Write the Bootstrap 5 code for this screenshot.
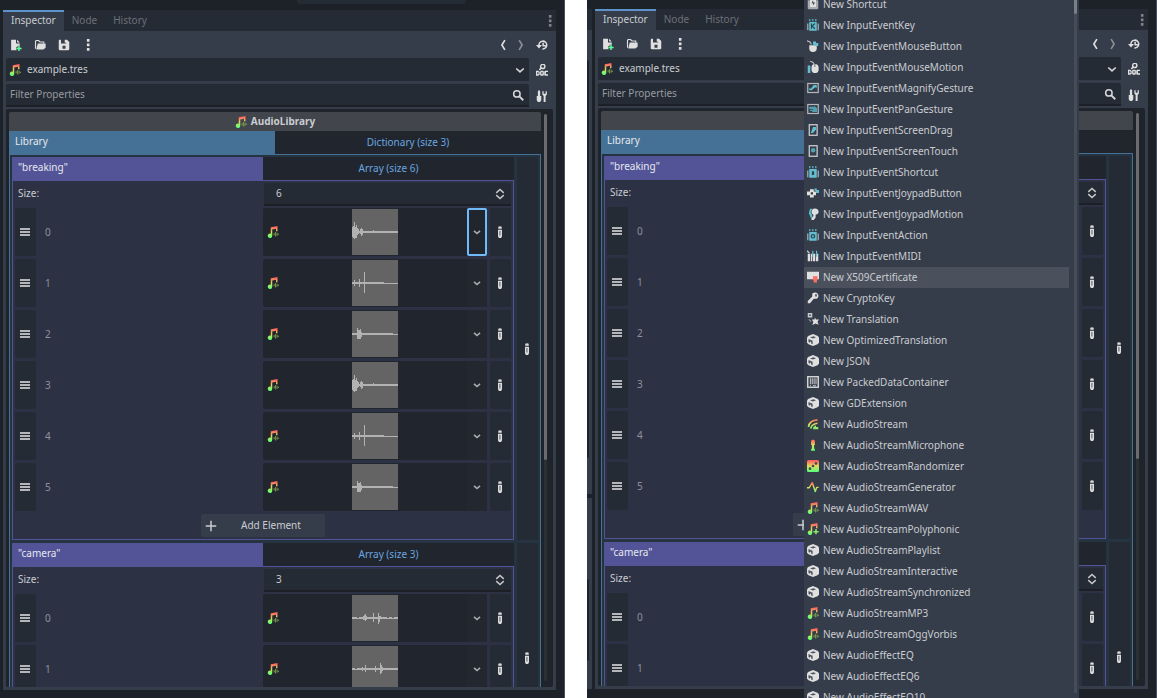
<!DOCTYPE html>
<html lang="en" data-bs-theme="dark">
<head>
<meta charset="utf-8">
<meta name="viewport" content="width=device-width, initial-scale=1">
<title>AudioLibrary inspector</title>
<link href="https://cdn.jsdelivr.net/npm/bootstrap@5.3.0/dist/css/bootstrap.min.css" rel="stylesheet">
<style>
:root{--base:#363d4a;--dark:#252b34;--deep:#21252d;--frame:#1d2128;--fg:#c9ccd1;--blue:#457196;--violet:#535398}
body{font:10px/15px "Noto Sans",sans-serif;color:var(--fg);background:#fff;height:100vh;overflow:hidden;display:grid;grid-template:100vh/minmax(0,565fr) minmax(0,22fr) minmax(0,570fr)}
button,input,select{font:inherit;color:inherit;border:0;border-radius:0;padding:0;background:none;min-width:0}
.ic{width:12px;height:12px;flex:none;display:block}
.shot{background:var(--frame);border-right:1px solid #4a515e;min-width:0}
.shot-a{grid-column:1;padding:10px 8px 8px 3px}
.shot-b{grid-column:3;padding:9px 8px 9px 0;gap:3px}
.top-tab{height:4px;width:30%;left:297px;background:var(--dark);border-radius:0 0 3px 3px}
.dock{background:var(--base);min-width:0}
.dock-tabs{height:21px;background:var(--dark);border:0}
.dock-tabs .nav-link{border:0;border-radius:0;height:21px;padding:2px 8px 3px;margin:0;color:#6b7079;line-height:16px}
.dock-tabs .nav-link.active{background:var(--base);color:var(--fg);border-top:2px solid #5c93cb;padding-top:0}
.dots{width:12px;height:21px;color:#7d8188}
.dock-body{padding:0 3px 3px;min-height:0}
.tools{height:27px;padding-left:4px;gap:12px;flex:none}
.path-row{margin-bottom:3px;flex:none}
.filter{margin-bottom:2px;flex:none}
.tools button,.side{color:#e0e0e0}
.side{width:24px;padding-left:2px;display:flex;align-items:center;justify-content:center;flex:none}
.step{gap:6px;margin-right:2px}
.field{height:23px;background:var(--dark);border-radius:2px 2px 0 0;position:relative}
.field select,.field input{width:100%;height:100%;appearance:none;outline:0}
.field select{padding-left:21px}
.field .lead-ic{position:absolute;left:3px;top:6px}
.field .tail-ic{position:absolute;right:3px;top:6px;color:#d5d6d8;pointer-events:none}
.filter .field .tail-ic{right:5px;top:5px}
.under{border-bottom:2px solid #1c2026}
.filter input{padding:0 0 1px 4px}
.filter input::placeholder{color:#969aa1;opacity:1}
.tree{background:#1f232a;border-radius:2px;padding:3px 3px 0;gap:3px}
.title-bar{height:19px;background:#42454c;border-radius:2px 2px 0 0;font-weight:700;gap:4px}
.half{flex:0 0 50%;min-width:0}
.head-row{height:24px}
.key{background:var(--blue);color:#e6e9ed;padding:3px 0 0 6px}
.val{background:var(--deep);border-bottom:1px solid var(--blue);color:#69a7e0}
.dict{background:#263341;border:solid var(--blue);border-width:0 1px;padding:2px 2px 0}
.entry{gap:3px;margin-bottom:3px}
.entry-tall{min-height:230px}
.arr .key{background:var(--violet)}
.arr .val{border-color:var(--violet)}
.arr-body{background:#2d3144;border:solid var(--violet);border-width:0 1px 1px;padding:2px}
.pen{width:21px;padding-right:1px;flex:none;background:var(--dark);color:#dcdcdc;border-radius:2px;display:flex;align-items:center;justify-content:center}
.size-row{margin-bottom:2px}
.size-row label{padding-left:3px;line-height:21px}
.spin{margin-left:1px;height:23px}
.spin input{padding:0 0 1px 12px;width:100%;height:21px;outline:0}
.spin .updn{width:23px;color:#c6c7c9;display:flex;align-items:center;justify-content:center;flex:none}
.item{height:48px;margin-bottom:3px;gap:3px}
.item .half{flex-basis:calc(50% - 3px)}
.grip{width:21px;padding-right:1px;background:var(--dark);color:#b4b6ba;border-radius:2px;display:flex;align-items:center;justify-content:center}
.idx{padding-left:9px;color:#8d919c}
.res{background:var(--deep);border-radius:2px}
.pick{display:grid;grid-template-columns:20px 1fr;align-items:center;justify-items:center;flex:1}
.wave{width:46px;height:46px;background:#646464;color:#b2b2b2;display:block}
.drop{width:20px;background:#232830;color:#a9abaf;display:flex;align-items:center;justify-content:center}
.drop.on{background:var(--deep);border:2px solid #70bafa;border-radius:2px}
.add{height:23px;width:124px;background:var(--base);border-radius:2px;padding-left:4px}
.track{width:3px;background:#2b2f36;margin:2px 3px 6px 0;border-radius:2px}
.track span{display:block;height:61%;background:#6a6c70;border-radius:2px}
.edge{width:5px;display:grid;grid-template-rows:484fr 191fr;gap:4px}
.edge-top{background:linear-gradient(var(--dark) 21px,var(--base) 21px);padding:51px 0 36px}
.edge-low{background:var(--base);padding:81px 0 28px}
.edge-in{width:2px;height:100%;background:#1f232a;border-radius:0 2px 2px 0}
.pop{top:0;bottom:0;left:217px;right:77px;background:var(--base);overflow:hidden;padding-right:2px}
.pop-list{margin:-6px 5px 0 0;padding:0;list-style:none;flex:1}
.pop-list button{height:21px;width:100%;display:flex;align-items:center;gap:4px;padding:0 0 1px 3px;text-align:left;white-space:nowrap}
.pop-list button.cur{background:#4b515c}
.pop-bar{width:3px;background:#464c58;margin-bottom:5px}
.pop-bar span{display:block;height:14px;background:#7b7f87;border-radius:0 0 2px 2px}
</style>
</head>
<body>
<svg width="0" height="0" class="position-absolute" aria-hidden="true">
<defs>
<linearGradient id="g" gradientUnits="userSpaceOnUse" x1="0" y1="1" x2="0" y2="15"><stop offset="0" stop-color="#ff5f5f"/><stop offset=".5" stop-color="#e1da5b"/><stop offset="1" stop-color="#5fff77"/></linearGradient>
<symbol id="note" viewBox="0 0 16 16"><path fill="url(#g)" d="M5 1.500 14 0v7h-2V3.600L7 4.500V13a3 3 0 1 1-2-2.800z"/><path stroke="#84ab48" stroke-width="1.200" d="M9.500 9.500v3M11.500 8v6M13.500 9v4M15.300 10.300v1.500"/></symbol>
<symbol id="poly" viewBox="0 0 16 16"><path fill="url(#g)" d="M5 1.500 14 0v7h-2V3.600L7 4.500V13a3 3 0 1 1-2-2.800z"/><path fill="#8eea66" d="M11 8h2v2.500h2.500v2H13V15h-2v-2.500H8.500v-2H11z"/></symbol>
<symbol id="new" viewBox="0 0 16 16"><path fill="currentColor" d="M1.500 1H8v5h5v3h-3v2H8v3h1v1H1.500zM9.500 1 13 4.500H9.500z"/><path fill="#5fff97" d="M11 9h2v2.500h2.500v2H13V16h-2v-2.500H8.500v-2H11z"/></symbol>
<symbol id="open" viewBox="0 0 16 16"><path fill="none" stroke="currentColor" stroke-width="1.500" d="M2 13V3l1-1h3l2 2h5v2"/><path fill="currentColor" d="M5 6h10.500v5.500L12.500 14H3z"/></symbol>
<symbol id="save" viewBox="0 0 16 16"><path fill="currentColor" fill-rule="evenodd" d="M1 2 2 1h2v5h7V1h1l3 3v10l-1 1H2l-1-1zm8-1h2v4H9zM6 9v4h4V9z"/></symbol>
<symbol id="dots" viewBox="0 0 16 16"><path fill="currentColor" d="M6.500 0h3.500v3.500H6.500zm0 6H10v3.500H6.500zm0 6H10v3.500H6.500z"/></symbol>
<symbol id="back" viewBox="0 0 16 16"><path fill="none" stroke="currentColor" stroke-width="2.200" d="M10.500 1.500 6.500 8l4 6.500"/></symbol>
<symbol id="fwd" viewBox="0 0 16 16"><path fill="none" stroke="currentColor" stroke-width="2.200" d="m5.500 1.500 4 6.500-4 6.500"/></symbol>
<symbol id="hist" viewBox="0 0 16 16"><path fill="none" stroke="currentColor" stroke-width="2" d="M4 9a5.200 5.200 0 1 1 4.500 4.200M9.500 5v4H13"/><path fill="currentColor" d="M0 8h8l-4 4.500z"/></symbol>
<symbol id="down" viewBox="0 0 16 16"><path fill="none" stroke="currentColor" stroke-width="2.200" d="m3 6 5 4.500L13 6"/></symbol>
<symbol id="chev" viewBox="0 0 16 16"><path fill="none" stroke="currentColor" stroke-width="2.200" d="m4 6.500 4 3.500 4-3.500"/></symbol>
<symbol id="find" viewBox="0 0 16 16"><circle cx="6.500" cy="6.500" r="4.300" fill="none" stroke="currentColor" stroke-width="2"/><path stroke="currentColor" stroke-width="2.500" d="m9.500 9.500 5.500 5.500"/></symbol>
<symbol id="doc" viewBox="0 0 16 16"><circle cx="9" cy="3.200" r="2.800" fill="none" stroke="currentColor" stroke-width="1.900"/><path d="M7 5 4.500 8" stroke="currentColor" stroke-width="2"/><path fill="currentColor" fill-rule="evenodd" d="M0 9h3l2 1.500v3.500L3 15.500H0zm1.800 1.800v3h.9l.7-.7v-1.600l-.7-.7zM6.500 9h3l1 1v4.500l-1 1h-3l-1-1V10zm.8 1.800v3h1.400v-3zM12 9h4v1.800h-2.700v3H16v1.700h-4l-1-1V10z"/></symbol>
<symbol id="tune" viewBox="0 0 16 16"><path fill="currentColor" d="M2.500 1.500 4 0l1.500 1.500V8H7v5.500L5.500 16h-3L1 13.500V8h1.500zM8.500 1.500h1.700V5h2.600V1.500h1.700V6l-1.700 2V16h-2.600V8L8.500 6z"/></symbol>
<symbol id="pen" viewBox="0 0 16 16"><path fill="currentColor" d="M5.700 1 8 .3l2.300.7v2.500H5.700zM5.300 5h5.400v8.500L9.500 16h-3l-1.200-2.500z"/><path fill="#4a4f57" d="M7.300 6.500h1.200v6H7.300z"/></symbol>
<symbol id="grip" viewBox="0 0 16 16"><path fill="currentColor" d="M1.300 2.700h13.400v2.600H1.300zm0 4H14.700v2.600H1.300zm0 4H14.700v2.600H1.300z"/></symbol>
<symbol id="updn" viewBox="0 0 16 16"><path fill="none" stroke="currentColor" stroke-width="2" d="M3 6.500 8 2l5 4.500M3 9.500 8 14l5-4.500"/></symbol>
<symbol id="plus" viewBox="0 0 16 16"><path fill="none" stroke="currentColor" stroke-width="2" d="M8 1v14M1 8h14"/></symbol>
<symbol id="cube" viewBox="0 0 16 16"><path fill="#e0e0e0" d="M8 0 14.500 2.500 16 4.500v7L14 13.500 8 16l-6-2.500-2-2v-7l1.500-2z"/><path fill="#4d5460" d="M4 4.500 8.500 3l3.500 1.300L8 6z"/><path fill="#4d5460" d="M2 6.500 7.500 9v4.500L5.500 12.600V10.500L4 10v1.500L2 10.500z"/></symbol>
<symbol id="short" viewBox="0 0 16 16"><path fill="#a8abb0" d="M1 3h14v11l-1 1H2l-1-1z"/><path fill="#e0e0e0" d="M4 1h8v11H4z"/><path fill="#454c58" d="m8 3-2 4h2v3l3-4H8.500z"/></symbol>
<symbol id="ikey" viewBox="0 0 16 16"><path fill="#929aa4" d="M0 6h2v9H0zM14 6h2v9h-2z"/><path fill="#62bfd0" d="M3 4h10v11.500H3zM3 0h1.500v3H3zM7 0h1.500v3H7zM11 0h1.500v3H11z"/><path fill="none" stroke="#29454f" stroke-width="1.600" d="M6 6v7M10.500 6 7 9.500l3.500 3.500"/></symbol>
<symbol id="isc" viewBox="0 0 16 16"><path fill="#929aa4" d="M0 6h2v9H0zM14 6h2v9h-2z"/><path fill="#62bfd0" d="M3 4h10v11.500H3zM3 0h1.500v3H3zM7 0h1.500v3H7zM11 0h1.500v3H11z"/><path fill="#29454f" d="M6.500 7h3v5h-3z"/></symbol>
<symbol id="iact" viewBox="0 0 16 16"><path fill="#929aa4" d="M0 6h2v9H0zM14 6h2v9h-2z"/><path fill="#62bfd0" d="M3 4h10v11.500H3zM3 0h1.500v3H3zM7 0h1.500v3H7zM11 0h1.500v3H11z"/><circle cx="8" cy="9.700" r="2.300" fill="none" stroke="#29454f" stroke-width="1.600"/></symbol>
<symbol id="mbtn" viewBox="0 0 16 16"><path fill="none" stroke="#b8bbc0" stroke-width="1.600" d="m0 1 4 1.500 2 3.500"/><path fill="#e0e0e0" d="M3 7h10v4a5 5 0 0 1-10 0z"/><path fill="#62bfd0" d="M8 2h4v2h3v4h-4L8 6z"/></symbol>
<symbol id="mmot" viewBox="0 0 16 16"><path fill="none" stroke="#b8bbc0" stroke-width="1.600" d="m4 0 4 2 2 3"/><path fill="#e0e0e0" d="M6 9q0-5 4.500-5Q15.500 4 15.500 9v2a4.700 5 0 0 1-9.500 0z"/><path fill="#62bfd0" d="M1 6h3.500v10H1z"/><path stroke="#454c58" d="M10.500 4v4"/></symbol>
<symbol id="mag" viewBox="0 0 16 16"><rect x="1" y="2" width="14" height="12" fill="none" stroke="#b4b7bc" stroke-width="1.600"/><path fill="#62bfd0" d="M9 4h4v4l-2-1-5 4H3V8l2 1z"/></symbol>
<symbol id="pan" viewBox="0 0 16 16"><rect x="1" y="2" width="14" height="12" fill="none" stroke="#b4b7bc" stroke-width="1.600"/><path fill="#4fa0b0" d="M3 5h7V4l3.500 3v5H7v-1.500H4V9h4V8H3z"/></symbol>
<symbol id="drag" viewBox="0 0 16 16"><rect x="3" y="1" width="10.500" height="14" fill="none" stroke="#d4d5d8" stroke-width="1.600"/><path fill="#62bfd0" d="M8 4h4v3l-4 5H5z"/></symbol>
<symbol id="touch" viewBox="0 0 16 16"><rect x="3" y="1" width="10.500" height="14" fill="none" stroke="#d4d5d8" stroke-width="1.600"/><circle cx="8.200" cy="7" r="3" fill="#4fa5b5"/></symbol>
<symbol id="jbtn" viewBox="0 0 16 16"><path fill="#e0e0e0" fill-rule="evenodd" d="M4 3h5v3h3v5H9v3H4v-3H0V6h4zm1 4v3h3V7z"/><path fill="#62bfd0" d="M10 2h3v2h3v4h-4V5h-2z"/></symbol>
<symbol id="jmot" viewBox="0 0 16 16"><path fill="#e0e0e0" d="M6 5q0-4 4.500-4.500Q15.500 1 15.500 5q0 3-4 4v3.500L9 16H6v-3l2.500-2V9Q6 8 6 5z"/><path fill="#62bfd0" d="M4 1h3L5 5l2 5v3H5L2.500 7z"/></symbol>
<symbol id="midi" viewBox="0 0 16 16"><path stroke="#c4c6ca" stroke-width="2" d="m0 1 3 3"/><path fill="#e0e0e0" d="M1 5h3v10H1zm4 0h2v10H5zm3 0h3v10H8zm4 0h3v10h-3z"/><path fill="#62bfd0" d="M7 1h1.500v8H7zM12 1h1.500v8H12z"/></symbol>
<symbol id="cert" viewBox="0 0 16 16"><path fill="#e0e0e0" d="M0 1h16v10H0z"/><path fill="#fc6f67" d="M8 7h6v5l-1 1v3l-2-1-2 1v-3l-1-1z"/></symbol>
<symbol id="key" viewBox="0 0 16 16"><path fill="#e0e0e0" fill-rule="evenodd" d="M7 2q4-3 7 0 3 4-1 7H9l-5 6H1v-3l6-6zm4 1v3h2V3z"/></symbol>
<symbol id="tran" viewBox="0 0 16 16"><path fill="#c8cacd" fill-rule="evenodd" d="M1 0h6v6H1zm2 2v2h2V2z"/><path fill="#e0e0e0" d="m10.500 6 1.500 2.500h4l-2 3 1.500 4-4-1.500-4.500 2 1.500-4-2-3.500h3.500z"/><path fill="#989da5" d="m3 8 3 3-1 1-3-3z"/></symbol>
<symbol id="pack" viewBox="0 0 16 16"><rect x="1" y="1" width="14" height="14" fill="none" stroke="#e0e0e0" stroke-width="1.800"/><path stroke="#c4c6ca" stroke-width="1.400" d="M4.500 3v8M7 3v8M9.500 3v8M12 3v8M4 13h1.500M8 13h4"/></symbol>
<symbol id="aud" viewBox="0 0 16 16"><path fill="none" stroke="url(#g)" stroke-width="2.200" d="M2 12Q3 3 14 2.500M5 14q1-6 9-7"/><path fill="#8eea66" d="M8 14q1-4 4-4v2h3v3H8z"/></symbol>
<symbol id="mic" viewBox="0 0 16 16"><path fill="url(#g)" d="M5.500 2 8 .500 10.500 2v6H9.500v5h1v2.500h-5V13h1V8h-1z"/></symbol>
<symbol id="rand" viewBox="0 0 16 16"><rect x="0" y="0" width="16" height="16" rx="2" fill="url(#g)"/><circle cx="4" cy="11.500" r="1.800" fill="#454c58"/><circle cx="8" cy="8" r="1.800" fill="#454c58"/><circle cx="12" cy="4.500" r="1.800" fill="#454c58"/></symbol>
<symbol id="gen" viewBox="0 0 16 16"><path fill="none" stroke="url(#g)" stroke-width="1.900" stroke-linejoin="round" d="M0 9h3l4-7 4 12 2-5.500h2.500"/></symbol>
<symbol id="wa" viewBox="0 0 46 46"><path fill="currentColor" d="M0 22h46v2H0zM0 18h1v10H0zm1-1h1v12H1zm1-4h1v17H2zm1 5h1v11H3zm1-2h1v13H4zm1 3h1v7H5zm1 1h1v5H6zm2 0h1v5H8zm1-1h1v8H9zm1 1h1v6h-1zm11 1h1v1h-1z"/></symbol>
<symbol id="wb" viewBox="0 0 46 46"><path fill="currentColor" d="M0 22h32v2H0zm32 1h14v1H32zM2 20h1v6H2zm5-1h1v8H7zm5-7h1v21h-1z"/></symbol>
<symbol id="wc" viewBox="0 0 46 46"><path fill="currentColor" d="M0 22h41v2H0zm41 1h5v1h-5zM5 17h1v11H5zm1 2h2v9H6zm2-1h1v10H8zm1 3h1v5H9z"/></symbol>
<symbol id="wd" viewBox="0 0 46 46"><path fill="currentColor" d="M0 22h5v2H0zm5 1h2v1H5zm2-1h28v2H7zm4-1h1v4h-1zm1-1h1v5h-1zm1-1h1v7h-1zm1 2h1v4h-1zm7-3h1v9h-1zm5 0h1v11h-1zm1 3h1v6h-1zm1 0h1v3h-1zm7 2h2v1h-2zm2-1h3v2h-3zm3 1h2v1h-2zm2-1h4v2h-4z"/></symbol>
<symbol id="we" viewBox="0 0 46 46"><path fill="currentColor" d="M0 22h3v2H0zm3 1h2v1H3zm2-1h41v2H5zm5-1h1v4h-1zm3-2h1v7h-1zm10 1h1v6h-1zm5-3h1v11h-1zm1 2h1v8h-1zm1 2h1v4h-1z"/></symbol>
</defs></svg>

<main class="shot shot-a position-relative d-flex">
  <div class="top-tab position-absolute top-0"></div>
  <div class="dock flex-fill d-flex flex-column" data-inspector="a"></div>
</main>
<section class="shot shot-b position-relative d-flex">
  <div class="edge"><div class="edge-top"><div class="edge-in"></div></div><div class="edge-low"><div class="edge-in"></div></div></div>
  <div class="dock flex-fill d-flex flex-column" data-inspector="b"></div>
  <div class="pop position-absolute d-flex"><ul class="pop-list" id="types"></ul><div class="pop-bar"><span></span></div></div>
</section>

<script>
const icon = (n, c = '') => `<svg class="ic ${c}" aria-hidden="true"><use href="#${n}"/></svg>`;
const item = (w, i, on) => `
  <div class="item d-flex">
    <div class="half d-flex"><button class="grip" aria-label="Reorder">${icon('grip')}</button><span class="idx align-self-center">${i}</span></div>
    <div class="res d-flex flex-fill"><button class="pick" aria-label="Sound ${i}">${icon('note')}<svg class="wave"><use href="#${w}"/></svg></button><button class="drop ${on ? 'on' : ''}" aria-label="Choose type">${icon('chev')}</button></div>
    <button class="pen" aria-label="Edit element">${icon('pen')}</button>
  </div>`;
const entry = (p, name, n, waves, whole) => `
  <div class="entry d-flex ${whole ? '' : 'entry-tall'}">
    <div class="arr flex-fill d-flex flex-column">
      <div class="head-row d-flex"><div class="key half">"${name}"</div><button class="val half">${p === 'a' ? `Array (size ${n})` : ''}</button></div>
      <div class="arr-body flex-fill">
        <div class="size-row d-flex"><label class="half" for="${p}-${name}">Size:</label><div class="spin under field d-flex flex-fill"><input id="${p}-${name}" type="text" inputmode="numeric" value="${p === 'a' ? n : ''}"><button class="updn" aria-label="Change size">${icon('updn')}</button></div></div>
        ${waves.map((w, i) => item(w, i, whole && !i && p === 'a')).join('')}
        ${whole ? `<button class="add d-flex align-items-center mx-auto" aria-label="Add Element">${icon('plus')}${p === 'a' ? '<span class="flex-fill text-center">Add Element</span>' : ''}</button>` : ''}
      </div>
    </div>
    <button class="pen" aria-label="Edit entry">${icon('pen')}</button>
  </div>`;
document.querySelectorAll('[data-inspector]').forEach(el => {
  // Inspector b has the type menu open over its value column, so those labels stay empty.
  const p = el.dataset.inspector;
  el.innerHTML = `
  <div class="dock-tabs nav nav-tabs flex-nowrap">
    <button class="nav-link active">Inspector</button><button class="nav-link">Node</button><button class="nav-link">History</button>
    <button class="dots ms-auto d-flex align-items-center" aria-label="Dock menu">${icon('dots')}</button>
  </div>
  <div class="dock-body d-flex flex-column flex-fill">
    <div class="tools d-flex align-items-center">
      <button aria-label="New">${icon('new')}</button><button aria-label="Open">${icon('open')}</button><button aria-label="Save">${icon('save')}</button><button aria-label="More">${icon('dots')}</button>
      <div class="ms-auto d-flex"><div class="step d-flex"><button aria-label="Back">${icon('back')}</button><button aria-label="Forward" class="opacity-50">${icon('fwd')}</button></div><button aria-label="History" class="side">${icon('hist')}</button></div>
    </div>
    <div class="path-row d-flex"><div class="field flex-fill">${icon('note','lead-ic')}<select aria-label="Resource"><option>example.tres</option></select>${icon('down','tail-ic')}</div><button class="side" aria-label="Documentation">${icon('doc')}</button></div>
    <div class="filter d-flex"><div class="field under flex-fill"><input type="text" placeholder="Filter Properties" aria-label="Filter Properties">${icon('find','tail-ic')}</div><button class="side" aria-label="Property tools">${icon('tune')}</button></div>
    <div class="tree d-flex flex-fill overflow-hidden">
      <div class="flex-fill">
        <div class="title-bar d-flex align-items-center justify-content-center">${p === 'a' ? icon('note') + '<span>AudioLibrary</span>' : ''}</div>
        <div class="head-row d-flex"><div class="key half">Library</div><button class="val half">${p === 'a' ? 'Dictionary (size 3)' : ''}</button></div>
        <div class="dict">${entry(p, 'breaking', 6, ['wa','wb','wc','wa','wb','wc'], true)}${entry(p, 'camera', 3, ['wd','we'], false)}</div>
      </div>
      <div class="track"><span></span></div>
    </div>
  </div>`;
});
const types = [['short','Shortcut'],['ikey','InputEventKey'],['mbtn','InputEventMouseButton'],['mmot','InputEventMouseMotion'],['mag','InputEventMagnifyGesture'],['pan','InputEventPanGesture'],['drag','InputEventScreenDrag'],['touch','InputEventScreenTouch'],['isc','InputEventShortcut'],['jbtn','InputEventJoypadButton'],['jmot','InputEventJoypadMotion'],['iact','InputEventAction'],['midi','InputEventMIDI'],['cert','X509Certificate'],['key','CryptoKey'],['tran','Translation'],['cube','OptimizedTranslation'],['cube','JSON'],['pack','PackedDataContainer'],['cube','GDExtension'],['aud','AudioStream'],['mic','AudioStreamMicrophone'],['rand','AudioStreamRandomizer'],['gen','AudioStreamGenerator'],['note','AudioStreamWAV'],['poly','AudioStreamPolyphonic'],['cube','AudioStreamPlaylist'],['cube','AudioStreamInteractive'],['cube','AudioStreamSynchronized'],['note','AudioStreamMP3'],['note','AudioStreamOggVorbis'],['cube','AudioEffectEQ'],['cube','AudioEffectEQ6'],['cube','AudioEffectEQ10']];
document.getElementById('types').innerHTML = types.map(([i, t]) => `<li><button class="${i === 'cert' ? 'cur' : ''}">${icon(i)}<span>New ${t}</span></button></li>`).join('');
</script>
<script src="https://cdn.jsdelivr.net/npm/bootstrap@5.3.0/dist/js/bootstrap.bundle.min.js"></script>
</body>
</html>
